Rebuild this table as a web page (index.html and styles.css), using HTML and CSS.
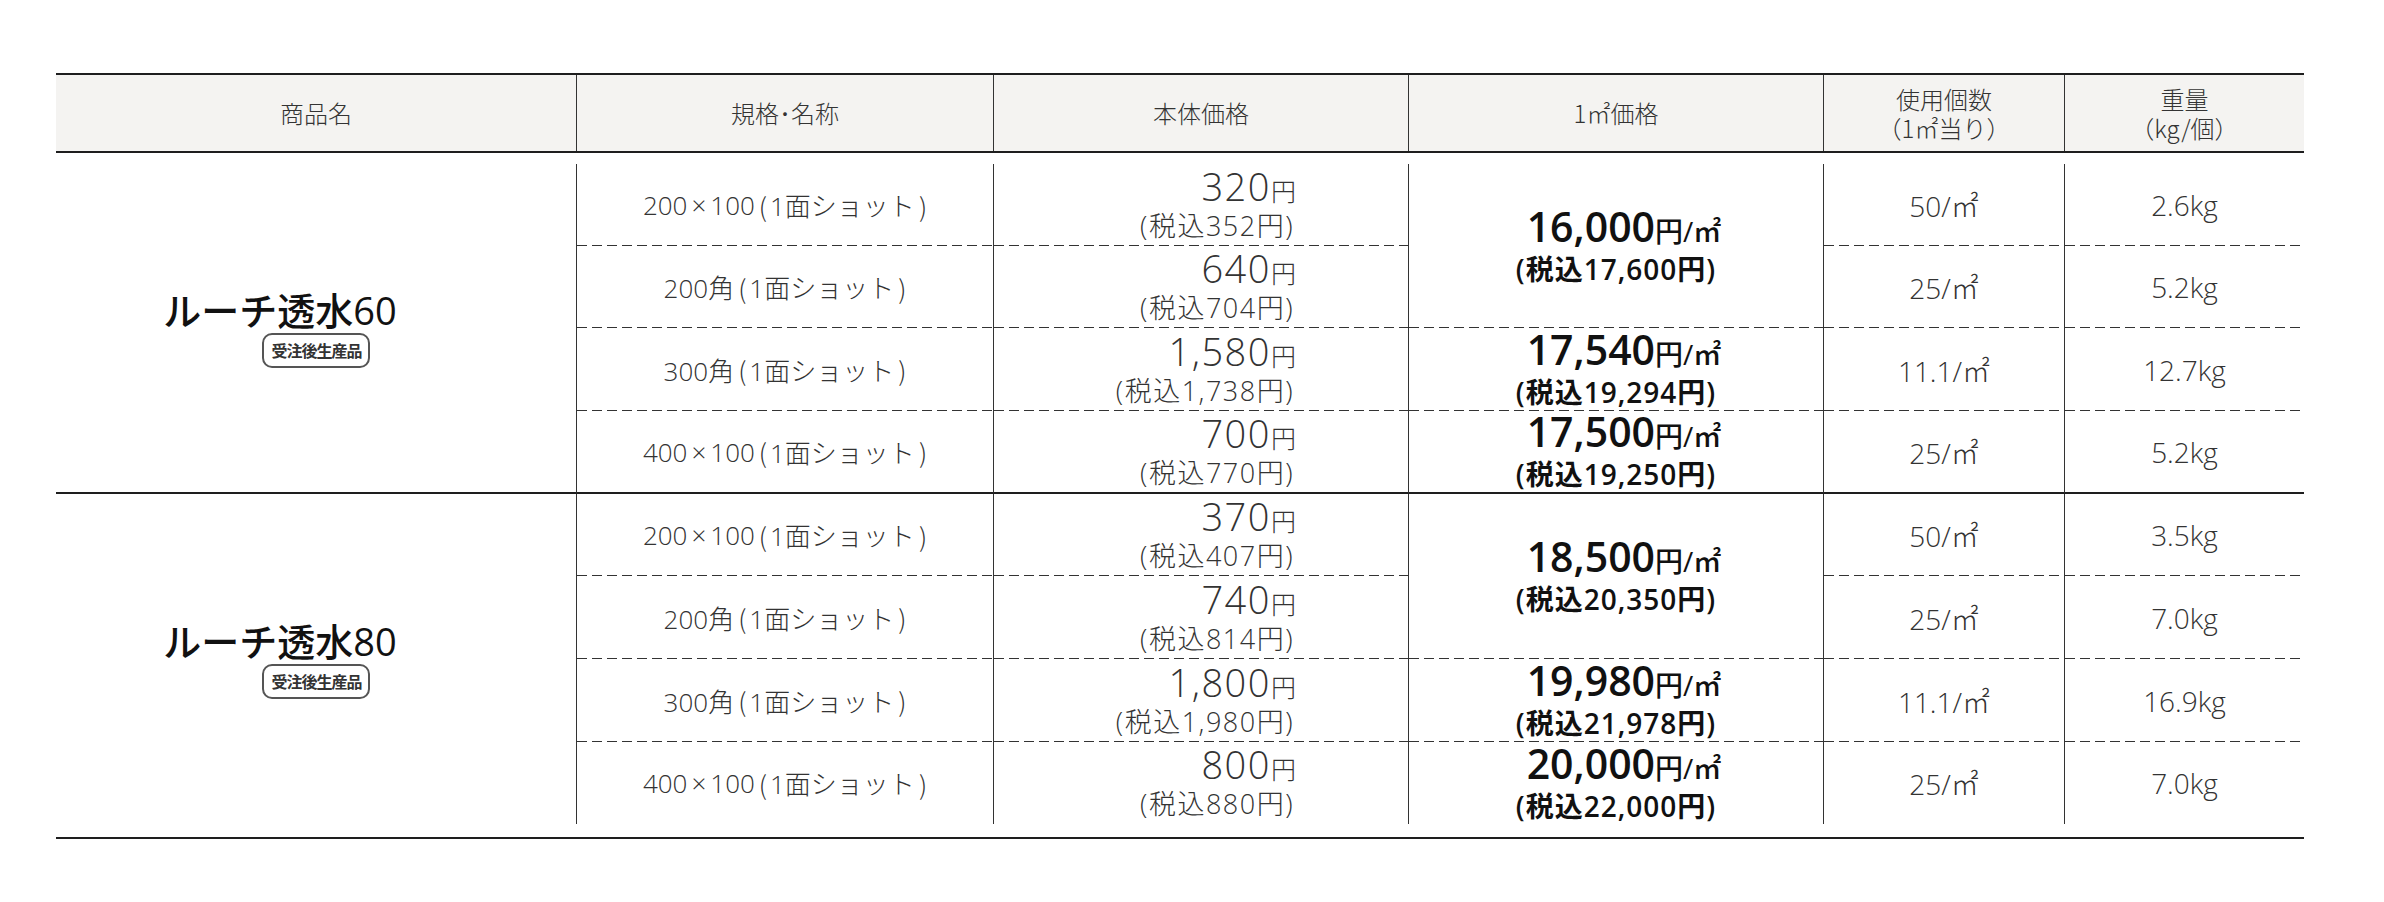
FILE: index.html
```html
<!DOCTYPE html>
<html lang="ja">
<head>
<meta charset="utf-8">
<title>ルーチ透水 価格表</title>
<link rel="stylesheet" href="styles.css">
</head>
<body>
<div class="wrap">
  <div class="table">
    <div class="head">
      <div class="hc">商品名</div>
      <div class="hc bl">規格･名称</div>
      <div class="hc bl">本体価格</div>
      <div class="hc bl">1㎡価格</div>
      <div class="hc bl"><div class="hl">使用個数</div><div class="hl">（1㎡当り）</div></div>
      <div class="hc bl"><div class="hl">重量</div><div class="hl">（kg/個）</div></div>
    </div>
    <div class="body">
      <!-- group 1 -->
      <div class="name sep"><div class="title">ルーチ透水60</div><div class="badge">受注後生産品</div></div>
      <div class="c spec dash">200<span class="x">×</span>100<span class="op">(</span>1面ショット<span class="cp">)</span></div>
      <div class="c price dash"><div class="p">320<span class="yen">円</span></div><div class="t">(税込352円)</div></div>
      <div class="c m2 span2 dash"><div class="p2">16,000<span class="u">円/㎡</span></div><div class="t2">(税込17,600円)</div></div>
      <div class="c num dash">50/㎡</div>
      <div class="c num dash">2.6kg</div>

      <div class="c spec dash">200角<span class="op">(</span>1面ショット<span class="cp">)</span></div>
      <div class="c price dash"><div class="p">640<span class="yen">円</span></div><div class="t">(税込704円)</div></div>
      <div class="c num dash">25/㎡</div>
      <div class="c num dash">5.2kg</div>

      <div class="c spec dash">300角<span class="op">(</span>1面ショット<span class="cp">)</span></div>
      <div class="c price dash"><div class="p">1,580<span class="yen">円</span></div><div class="t">(税込1,738円)</div></div>
      <div class="c m2 dash"><div class="p2">17,540<span class="u">円/㎡</span></div><div class="t2">(税込19,294円)</div></div>
      <div class="c num dash">11.1/㎡</div>
      <div class="c num dash">12.7kg</div>

      <div class="c spec sep">400<span class="x">×</span>100<span class="op">(</span>1面ショット<span class="cp">)</span></div>
      <div class="c price sep"><div class="p">700<span class="yen">円</span></div><div class="t">(税込770円)</div></div>
      <div class="c m2 sep"><div class="p2">17,500<span class="u">円/㎡</span></div><div class="t2">(税込19,250円)</div></div>
      <div class="c num sep">25/㎡</div>
      <div class="c num sep">5.2kg</div>

      <!-- group 2 -->
      <div class="name"><div class="title">ルーチ透水80</div><div class="badge">受注後生産品</div></div>
      <div class="c spec dash">200<span class="x">×</span>100<span class="op">(</span>1面ショット<span class="cp">)</span></div>
      <div class="c price dash"><div class="p">370<span class="yen">円</span></div><div class="t">(税込407円)</div></div>
      <div class="c m2 span2 dash"><div class="p2">18,500<span class="u">円/㎡</span></div><div class="t2">(税込20,350円)</div></div>
      <div class="c num dash">50/㎡</div>
      <div class="c num dash">3.5kg</div>

      <div class="c spec dash">200角<span class="op">(</span>1面ショット<span class="cp">)</span></div>
      <div class="c price dash"><div class="p">740<span class="yen">円</span></div><div class="t">(税込814円)</div></div>
      <div class="c num dash">25/㎡</div>
      <div class="c num dash">7.0kg</div>

      <div class="c spec dash">300角<span class="op">(</span>1面ショット<span class="cp">)</span></div>
      <div class="c price dash"><div class="p">1,800<span class="yen">円</span></div><div class="t">(税込1,980円)</div></div>
      <div class="c m2 dash"><div class="p2">19,980<span class="u">円/㎡</span></div><div class="t2">(税込21,978円)</div></div>
      <div class="c num dash">11.1/㎡</div>
      <div class="c num dash">16.9kg</div>

      <div class="c spec">400<span class="x">×</span>100<span class="op">(</span>1面ショット<span class="cp">)</span></div>
      <div class="c price"><div class="p">800<span class="yen">円</span></div><div class="t">(税込880円)</div></div>
      <div class="c m2"><div class="p2">20,000<span class="u">円/㎡</span></div><div class="t2">(税込22,000円)</div></div>
      <div class="c num">25/㎡</div>
      <div class="c num">7.0kg</div>
    </div>
  </div>
</div>
</body>
</html>
```

FILE: styles.css
```css
* { box-sizing: border-box; }
html, body { margin: 0; padding: 0; background: #fff; }
body {
  font-family: "Open Sans", "Noto Sans CJK JP", sans-serif;
  color: #222;
}
.wrap { padding: 73px 80px 40px 56px; }
.table { width: 2248px; }

.head {
  display: grid;
  grid-template-columns: 520px 417px 415px 415px 241px 240px;
  height: 80px;
  border-top: 2px solid #1e1e1e;
  border-bottom: 2px solid #1e1e1e;
  background: #f4f3f1;
}
.hc {
  display: flex;
  flex-direction: column;
  align-items: center;
  justify-content: center;
  text-align: center;
  font-family: "Noto Sans CJK JP", sans-serif;
  font-weight: 300;
  font-size: 24px;
  line-height: 30px;
  color: #333;
}
.hl { line-height: 29px; height: 29px; }
.bl { border-left: 1px solid #333; }

.body {
  display: grid;
  grid-template-columns: 520px 417px 415px 415px 241px 240px;
  grid-template-rows: 82px 82px 83px 83px 82px 83px 83px 82px;
  padding: 11px 0 13px;
  border-bottom: 2px solid #1e1e1e;
}
.c {
  border-left: 1px solid #333;
  display: flex;
  flex-direction: column;
  justify-content: center;
  align-items: center;
}
.dash {
  background-image: repeating-linear-gradient(90deg, #333 0 10px, transparent 10px 15px);
  background-size: 100% 1px;
  background-position: left bottom;
  background-repeat: no-repeat;
}
.sep { border-bottom: 2px solid #1e1e1e; }
.span2 { grid-row: span 2; }

.name {
  grid-row: span 4;
  display: flex;
  flex-direction: column;
  align-items: center;
  justify-content: center;
}
.title {
  font-family: "Open Sans", "Noto Sans CJK JP", sans-serif;
  font-size: 38px;
  line-height: 42px;
  font-weight: 500;
  color: #111;
  margin-right: 72px;
}
.badge {
  margin-top: 2px;
  display: flex;
  align-items: center;
  height: 35px;
  font-family: "Noto Sans CJK JP", sans-serif;
  font-weight: 700;
  font-size: 16px;
  letter-spacing: -1px;
  line-height: 20px;
  padding: 0 6px 0 7px;
  border: 2px solid #555;
  border-radius: 10px;
  color: #333;
}

.spec {
  flex-direction: row;
  justify-content: center;
  font-family: "Open Sans", "Noto Sans CJK JP", sans-serif;
  font-weight: 300;
  font-size: 26px;
  color: #333;
}
.spec .x { margin: 0 4px; }
.spec .op, .spec .cp { font-family: "Noto Sans CJK JP", sans-serif; font-weight: 300; }
.spec .op { margin: 0 3px 0 4px; }
.spec .cp { margin-left: 4px; }

.price {
  align-items: flex-end;
  padding-right: 112px;
  font-weight: 300;
  color: #333;
}
.price .p { font-size: 38px; line-height: 38px; letter-spacing: 1.5px; }
.price .yen { font-family: "Noto Sans CJK JP", sans-serif; font-size: 25px; letter-spacing: 0; }
.price .t { font-size: 27px; line-height: 34px; letter-spacing: 1.5px; margin-right: 2px; }

.m2 { color: #111; }
.m2 .p2 { font-size: 41px; line-height: 40px; font-weight: 600; margin-left: 16px; }
.m2 .u { font-size: 28px; font-weight: 500; }
.m2 .t2 { font-size: 28px; line-height: 36px; font-weight: 600; letter-spacing: 1px; }

.num {
  font-weight: 300;
  font-size: 28px;
  color: #333;
}
```
